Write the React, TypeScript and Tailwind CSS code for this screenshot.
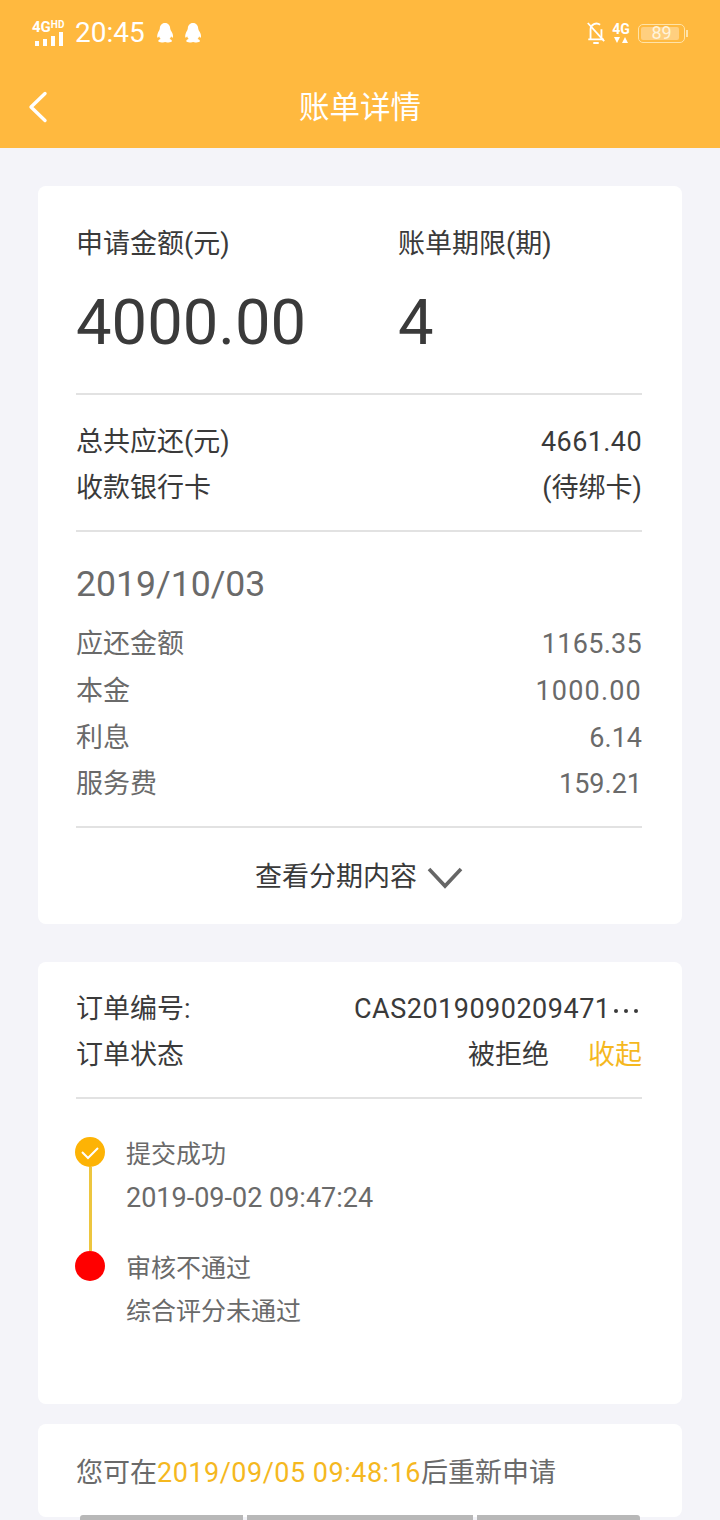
const font = { fontFamily: 'Roboto, "Noto Sans CJK SC", sans-serif' };

function QQ() {
  return (
    <svg width="18" height="20" viewBox="0 0 18 20" fill="#fff">
      <path d="M9 0C5.600 0 4 2.600 3.800 5.400 3.700 7 2.600 8 1.800 10.200 1 12.400 1 14.400 1.600 14.600c.5.2 1.100-.8 1.500-1.400.2 1.100.8 2.200 1.600 2.900-1.200.4-2.400 1-2.400 1.900 0 1.300 2.600 1.600 4.600 1.400 1-.1 1.600-.5 2.200-.5s1.200.4 2.200.5c2 .2 4.600-.1 4.600-1.400 0-.9-1.200-1.500-2.400-1.900.8-.7 1.400-1.800 1.600-2.900.4.600 1 1.600 1.500 1.400.6-.2.6-2.200-.2-4.400C15.400 8 14.300 7 14.200 5.400 14 2.600 12.400 0 9 0Z" />
    </svg>
  );
}

function StatusBar() {
  return (
    <div className="h-[66px] flex items-center justify-between pl-[32px] pr-[32px] text-white">
      <div className="flex items-center">
        <div className="w-[34px] flex flex-col items-start">
          <div className="text-[15px] font-bold leading-[12px] flex items-start h-[12px]">
            4G<span className="text-[10px] leading-[9px] -mt-[1px]">HD</span>
          </div>
          <div className="flex items-start gap-[4px] -mt-[1px] ml-[3px] h-[14px]">
            <div className="w-[4px] h-[5px] mt-[9px] bg-white" />
            <div className="w-[4px] h-[7px] mt-[7px] bg-white" />
            <div className="w-[4px] h-[10px] mt-[4px] bg-white" />
            <div className="w-[4px] h-[14px] bg-white" />
          </div>
        </div>
        <span className="text-[28px] ml-[9px] leading-none">20:45</span>
        <div className="flex items-center gap-[10px] ml-[11px]">
          <QQ />
          <QQ />
        </div>
      </div>
      <div className="flex items-center">
        <svg width="20" height="26" viewBox="0 0 22 26" fill="none" stroke="#fff" strokeWidth="2">
          <path d="M5 19V9a6.500 6.500 0 0 1 10.500-5M17 9v10M2.500 20h17M8 24h6" />
          <path d="M2 2l18 20" />
        </svg>
        <div className="flex flex-col items-center ml-[5px] w-[20px]">
          <span className="text-[14px] font-bold leading-[14px]">4G</span>
          <svg width="15" height="8" viewBox="0 0 15 8" fill="#fff">
            <path d="M0 1h6L3 7ZM8 7h6l-3-6Z" />
          </svg>
        </div>
        <div className="flex items-center ml-[7px]">
          <div className="w-[47px] h-[19px] border border-[#ffe3a8] rounded-[5px] p-[2px] relative">
            <div className="h-full w-[38px] bg-[#ffcf7f] rounded-[2px]" />
            <span className="absolute inset-0 flex items-center justify-center text-[18px] leading-none text-[#fff3da]">89</span>
          </div>
          <div className="w-[2px] h-[7px] bg-[#ffe3a8] ml-[1px]" />
        </div>
      </div>
    </div>
  );
}

function Row({ label, value, className, valueClassName }: { label: string; value: string; className?: string; valueClassName?: string }) {
  return (
    <div className={`flex justify-between items-center ${className ?? ''}`}>
      <span>{label}</span>
      <span className={valueClassName}>{value}</span>
    </div>
  );
}

export default function App() {
  return (
    <div style={font} className="w-[720px] h-[1520px] overflow-hidden bg-[#f4f4f9] text-[27px]">
      <div className="h-[148px] bg-[#ffb93f]">
        <StatusBar />
        <div className="h-[82px] relative flex items-center justify-center pt-[1px]">
          <svg className="absolute left-[27px] top-[24px]" width="22" height="34" viewBox="0 0 22 34" fill="none" stroke="#fff" strokeWidth="3.400" strokeLinecap="round" strokeLinejoin="round">
            <path d="M18 3.500 4 17l14 13.500" />
          </svg>
          <span className="text-white text-[30.500px]">账单详情</span>
        </div>
      </div>

      <div className="px-[38px] pt-[38px]">
        {/* Summary */}
        <div className="h-[738px] bg-white rounded-[8px] pl-[38px] pr-[40px] pt-[41px] text-[#3a3a3a]">
          <div className="flex h-[168px] border-b-2 border-[#e2e2e2]">
            <div className="w-[322px]">
              <div className="leading-[34px]">申请金额(元)</div>
              <div className="text-[63.300px] leading-[70px] mt-[26px]">4000.00</div>
            </div>
            <div>
              <div className="leading-[34px]">账单期限(期)</div>
              <div className="text-[63.300px] leading-[70px] mt-[26px]">4</div>
            </div>
          </div>
          <div className="h-[137px] border-b-2 border-[#e2e2e2] pt-[24px]">
            <Row label="总共应还(元)" value="4661.40" className="h-[46px]" valueClassName="tracking-[0.4px]" />
            <Row label="收款银行卡" value="(待绑卡)" className="h-[46px]" />
          </div>
          <div className="h-[296px] border-b-2 border-[#e2e2e2] text-[#6a6a6a] pt-[30px]">
            <div className="text-[35.600px] leading-[44px]">2019/10/03</div>
            <div className="mt-[14px]">
              <Row label="应还金额" value="1165.35" className="h-[48px]" valueClassName="tracking-[0.3px]" />
              <Row label="本金" value="1000.00" className="h-[47px]" valueClassName="tracking-[1.2px]" />
              <Row label="利息" value="6.14" className="h-[46px]" />
              <Row label="服务费" value="159.21" className="h-[46px]" />
            </div>
          </div>
          <div className="flex items-center justify-center h-[95px] pt-[4px]">
            <span>查看分期内容</span>
            <svg className="ml-[10px]" width="36" height="24" viewBox="0 0 36 24" fill="none" stroke="#666" strokeWidth="3.600">
              <path d="M2 3l16 17L34 3" />
            </svg>
          </div>
        </div>

        {/* Order */}
        <div className="h-[442px] mt-[38px] bg-white rounded-[8px] pl-[38px] pr-[40px] pt-[25px] text-[#3a3a3a]">
          <div className="h-[112px] border-b-2 border-[#e2e2e2]">
            <div className="flex justify-between items-center h-[45px]">
              <span>订单编号:</span>
              <span className="w-[288px] flex items-center whitespace-nowrap tracking-[0.5px]">
                CAS2019090209471
                <span className="flex gap-[6px] ml-[4px] mt-[2px]">
                  <span className="w-[4px] h-[4px] rounded-full bg-[#3a3a3a]" />
                  <span className="w-[4px] h-[4px] rounded-full bg-[#3a3a3a]" />
                  <span className="w-[4px] h-[4px] rounded-full bg-[#3a3a3a]" />
                </span>
              </span>
            </div>
            <div className="flex items-center h-[46px]">
              <span className="flex-1">订单状态</span>
              <span>被拒绝</span>
              <span className="ml-[39px] text-[#f5b81f]">收起</span>
            </div>
          </div>
          <div className="flex mt-[38px] text-[#6a6a6a] text-[25px]">
            <div className="w-[30px] -ml-[1px] flex flex-col items-center">
              <div className="w-[30px] h-[30px] rounded-full bg-[#fdb305] flex items-center justify-center">
                <svg width="20" height="15" viewBox="0 0 20 15" fill="none" stroke="#fff" strokeWidth="2">
                  <path d="M2 7l6 6L18 3" />
                </svg>
              </div>
              <div className="w-[3px] h-[84px] bg-[#edc63f]" />
              <div className="w-[30px] h-[30px] rounded-full bg-[#ff0000]" />
            </div>
            <div className="ml-[21px] pt-[1px]">
              <div className="leading-[34px]">提交成功</div>
              <div className="leading-[34px] mt-[9px] text-[27px]">2019-09-02 09:47:24</div>
              <div className="leading-[34px] mt-[37px]">审核不通过</div>
              <div className="leading-[34px] mt-[9px]">综合评分未通过</div>
            </div>
          </div>
        </div>

        {/* Reapply */}
        <div className="h-[93px] mt-[20px] bg-white rounded-[8px] pl-[38px] pt-[30px] text-[#6a6a6a] leading-[38px]">
          您可在<span className="text-[#f5b81f] tracking-[0.5px]">2019/09/05 09:48:16</span>后重新申请
        </div>
        <div className="relative -mt-[2px] mx-[42px] flex gap-[4px] h-[5px]">
          <div className="w-[163px] bg-[#b8b8b8] rounded-tl-[3px]" />
          <div className="w-[226px] bg-[#b8b8b8]" />
          <div className="w-[163px] bg-[#b8b8b8] rounded-tr-[3px]" />
        </div>
      </div>
    </div>
  );
}
